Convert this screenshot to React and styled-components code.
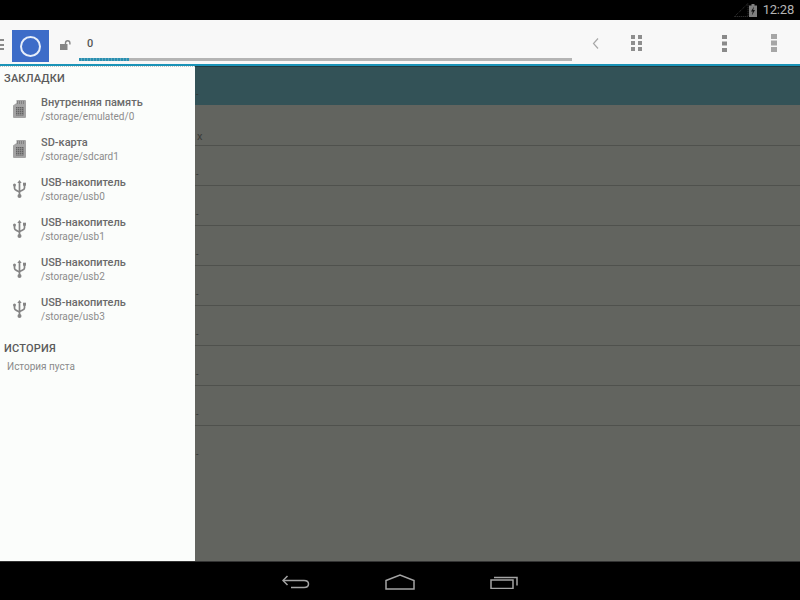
import React from "react";
import styled, { createGlobalStyle } from "styled-components";

const Global = createGlobalStyle`
  html, body { margin: 0; padding: 0; background: #000; }
  body { width: 800px; height: 600px; overflow: hidden; font-family: Roboto, "Liberation Sans", sans-serif; }
  * { box-sizing: border-box; }
`;

const Screen = styled.div`
  width: 800px; height: 600px; display: flex; flex-direction: column;
`;
const StatusBar = styled.div`
  height: 20px; background: #000; display: flex; align-items: center; justify-content: flex-end; padding-right: 6px;
`;
const Clock = styled.span`
  color: #b4b4b4; font-size: 13px; letter-spacing: -0.2px; line-height: 20px; margin-left: 6px;
`;
const Toolbar = styled.div`
  height: 46px; background: #f8f8f8; border-bottom: 2px solid #1a93b7; display: flex; align-items: flex-start; position: relative;
`;
const Menu = styled.div`
  width: 4px; height: 11px; margin: 19px 8px 0 0; display: flex; flex-direction: column; justify-content: space-between;
  & > i { display: block; height: 2px; background: #8a8a8a; }
`;
const LogoButton = styled.div`
  width: 37px; height: 32px; margin-top: 10px; background: #3d6cc8; display: flex; align-items: center; justify-content: center;
`;
const Ring = styled.div`
  width: 21px; height: 21px; border: 2px solid #e6eefa; border-radius: 50%;
`;
const LockSlot = styled.div`
  width: 30px; margin-top: 20px; padding-left: 11px; display: flex;
`;
const PathArea = styled.div`
  width: 493px; height: 44px; display: flex; flex-direction: column;
`;
const PathText = styled.div`
  font-size: 11px; font-weight: 500; color: #555; line-height: 14px; padding: 17px 0 0 8px; height: 38px;
`;
const Track = styled.div`
  height: 3px; background: #b4b4b4; display: flex;
`;
const Fill = styled.div`
  width: 50px; background: repeating-linear-gradient(90deg, #2a8fb0 0 2px, #5aa6bf 2px 3px);
`;
const Tools = styled.div`
  flex: 1; height: 44px; padding-top: 2px; display: flex; align-items: center;
`;
const ToolIcon = styled.div`
  margin-left: ${p => p.$ml}px; display: flex;
`;
const Main = styled.div`
  flex: 1; position: relative; background: #62645f; overflow: hidden;
`;
const TealHeader = styled.div`
  height: 40px; background: #335257; border-top: 1px solid #1f3a40; border-bottom: 1px solid #62645f;
`;
const Row = styled.div`
  height: 40px; border-bottom: 1px solid #4f514d;
`;
const Tick = styled.span`
  position: absolute; left: 196px; top: ${p => p.$top}px; font-size: 9px; line-height: 9px; color: #2f302d;
`;
const RowMark = styled.span`
  position: absolute; left: 197px; top: 65px; font-size: 11px; line-height: 11px; color: #3a3b38;
`;
const Drawer = styled.div`
  position: absolute; left: 0; top: 0; bottom: 0; width: 195px; background: #fbfdfb; padding-top: 5px; border-top: 1px dotted #c4c4c4;
`;
const Heading = styled.div`
  font-size: 11px; font-weight: 500; color: #5a5a5a; line-height: 14px; padding-left: 4px; letter-spacing: 0.2px;
`;
const Bookmarks = styled.div`
  display: flex; flex-direction: column; margin-bottom: 15px; margin-top: 1px;
`;
const Bookmark = styled.div`
  height: 40px; display: flex; align-items: flex-start;
`;
const BookIcon = styled.div`
  width: 41px; height: 40px; padding: 13px 0 0 13px;
`;
const BookText = styled.div`
  display: flex; flex-direction: column; padding-top: 9px;
`;
const Title = styled.div`
  font-size: 11px; font-weight: 500; color: #6a6a6a; line-height: 14px;
`;
const Sub = styled.div`
  font-size: 10px; color: #8c8c8c; line-height: 14px;
`;
const Empty = styled.div`
  font-size: 10px; color: #8a8a8a; line-height: 14px; padding: 4px 0 0 7px;
`;
const NavBar = styled.div`
  height: 39px; background: #000; display: flex; align-items: center; justify-content: center; gap: 75px; padding: 2px 0 0 0; border-top: 1px solid #333;
`;

const Sd = () => (
  <svg width="13" height="18" viewBox="0 0 13 18">
    <path d="M3.500 0H12a1 1 0 0 1 1 1v16a1 1 0 0 1-1 1H1a1 1 0 0 1-1-1V5.500L3.500 3z" fill="#a4a4a4" />
    <path d="M4.500 1v3M6.500 1v3M8.500 1v3M10.500 1v3" stroke="#7a7a7a" strokeWidth="0.8" />
    <path d="M3 7h7.500v8.500H3z" fill="#646464" />
    <path d="M3 8.500h7.500M3 10.500h7.500M3 12.500h7.500M3 14.500h7.500M4.500 7v8.500M6.500 7v8.500M8.500 7v8.500" stroke="#9a9a9a" strokeWidth="0.6" />
  </svg>
);
const Usb = () => (
  <svg width="13" height="18" viewBox="0 0 13 18" fill="none" stroke="#858585" strokeWidth="1.700">
    <path d="M6.500 2v14" />
    <path d="M6.500 0 4.300 3h4.400z" fill="#858585" stroke="none" />
    <path d="M1.500 6v2.200c0 1.400 1 1.900 2.200 2.400L6.500 12" />
    <path d="M11.500 5v3c0 1.200-1 1.700-2.200 2.200L6.500 11.500" />
    <circle cx="1.500" cy="5" r="1.500" fill="#858585" stroke="none" />
    <rect x="10" y="2.700" width="3" height="3" fill="#858585" stroke="none" />
    <circle cx="6.500" cy="16" r="2" fill="#858585" stroke="none" />
  </svg>
);
const Squares = ({ w, h, cols, stepX, stepY, cw, ch, color }) => (
  <svg width={w} height={h} viewBox={`0 0 ${w} ${h}`}>
    {Array.from({ length: cols }).flatMap((_, c) =>
      [0, 1, 2].map(r => <rect key={`${c}${r}`} x={c * stepX} y={r * stepY} width={cw} height={ch} fill={color} />)
    )}
  </svg>
);

const items = [
  ["Внутренняя память", "/storage/emulated/0", "sd"],
  ["SD-карта", "/storage/sdcard1", "sd"],
  ["USB-накопитель", "/storage/usb0", "usb"],
  ["USB-накопитель", "/storage/usb1", "usb"],
  ["USB-накопитель", "/storage/usb2", "usb"],
  ["USB-накопитель", "/storage/usb3", "usb"],
];

export default function App() {
  return (
    <Screen>
      <Global />
      <StatusBar>
        <svg width="15" height="14" viewBox="0 0 15 14"><path d="M.5 13.500 14 .5v13z" fill="none" stroke="#3c3c3c" strokeWidth="1" strokeDasharray="1 1" /></svg>
        <svg width="8" height="13" viewBox="0 0 8 13"><path d="M2.500 0h3v1.500H8V13H0V1.500h2.500z" fill="#7e7e7e" /><path d="M5 2.500 2 7.500h1.800l-1 4 3.200-5.500H4.200z" fill="#111" /></svg>
        <Clock>12:28</Clock>
      </StatusBar>
      <Toolbar>
        <Menu><i /><i /><i /></Menu>
        <LogoButton><Ring /></LogoButton>
        <LockSlot>
          <svg width="12" height="10" viewBox="0 0 12 10">
            <rect x="0" y="4" width="7.500" height="6" fill="#858585" />
            <path d="M5.500 4.500V3a2.200 2.200 0 0 1 4.400 0v1.500" fill="none" stroke="#858585" strokeWidth="1.400" />
          </svg>
        </LockSlot>
        <PathArea>
          <PathText>0</PathText>
          <Track><Fill /></Track>
        </PathArea>
        <Tools>
          <ToolIcon $ml={20}>
            <svg width="7" height="11" viewBox="0 0 7 11"><path d="M6 .5 1.500 5.500 6 10.500" fill="none" stroke="#a8a8a8" strokeWidth="1.200" /></svg>
          </ToolIcon>
          <ToolIcon $ml={32}><Squares w={11} h={16} cols={2} stepX={7} stepY={6} cw={4} ch={4} color="#8e8e8e" /></ToolIcon>
          <ToolIcon $ml={80}><Squares w={5} h={17} cols={1} stepX={0} stepY={6.500} cw={5} ch={4} color="#8a8a8a" /></ToolIcon>
          <ToolIcon $ml={44}><Squares w={6} h={18} cols={1} stepX={0} stepY={6.500} cw={6} ch={5} color="#a6a6a6" /></ToolIcon>
        </Tools>
      </Toolbar>
      <Main>
        <TealHeader />
        {Array.from({ length: 8 }, (_, i) => <Row key={i} />)}
        <RowMark>x</RowMark>
        <Tick $top={24}>-</Tick>
        {[108, 148, 188, 228, 268, 308, 348, 388].map(t => <Tick key={t} $top={t - 4}>-</Tick>)}
        <Drawer>
          <Heading>ЗАКЛАДКИ</Heading>
          <Bookmarks>
            {items.map(([t, s, k], i) => (
              <Bookmark key={i}>
                <BookIcon>{k === "sd" ? <Sd /> : <Usb />}</BookIcon>
                <BookText><Title>{t}</Title><Sub>{s}</Sub></BookText>
              </Bookmark>
            ))}
          </Bookmarks>
          <Heading>ИСТОРИЯ</Heading>
          <Empty>История пуста</Empty>
        </Drawer>
      </Main>
      <NavBar>
        <svg width="28" height="14" viewBox="0 0 28 14" fill="none" stroke="#a4a4a4" strokeWidth="1.500"><path d="M1 5.500h21c6 0 6 7 0 7H9" /><path d="M5.500 1 1 5.500 5.500 10" /></svg>
        <svg width="30" height="16" viewBox="0 0 30 16" fill="none" stroke="#a4a4a4" strokeWidth="1.500"><path d="M1 6.500 15 1l14 5.500V15H1z" /></svg>
        <svg width="28" height="14" viewBox="0 0 28 14" fill="none" stroke="#a4a4a4" strokeWidth="1.500"><rect x="1" y="5" width="22" height="8.500" /><path d="M4 2.500h23v8" /></svg>
      </NavBar>
    </Screen>
  );
}
